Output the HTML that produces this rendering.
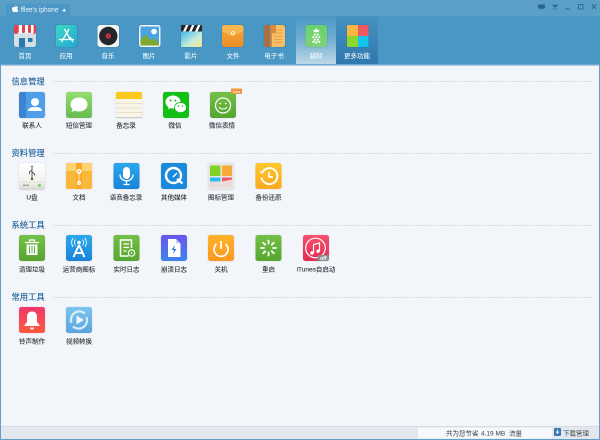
<!DOCTYPE html>
<html><head><meta charset="utf-8"><style>
html,body{margin:0;padding:0;width:600px;height:440px;overflow:hidden;background:#f2f5fa}
svg{display:block;filter:blur(.25px)}
text{font-family:"Liberation Sans","Noto Sans CJK SC",sans-serif}
.t{font-size:6.5px;fill:#f0f7fb;stroke:#f0f7fb;stroke-width:.08;text-anchor:middle}
.l{font-size:6.5px;fill:#2c3136;stroke:#2c3136;stroke-width:.1;text-anchor:middle}
.h{font-size:8.3px;fill:#1f5f96;stroke:#1f5f96;stroke-width:.12}
.d{stroke:#c2c9d2;stroke-width:.7;stroke-dasharray:1.5 1.5}
.s{filter:drop-shadow(0 .8px .6px rgba(20,60,90,.4))}
.g{filter:drop-shadow(0 .5px .4px rgba(90,100,110,.3))}
</style></head><body>
<svg width="600" height="440" viewBox="0 0 600 440" xmlns="http://www.w3.org/2000/svg">
<defs>
<linearGradient id="act" x1="0" y1="0" x2="0" y2="1"><stop offset="0" stop-color="#4b98c6"/><stop offset=".45" stop-color="#6eacd0"/><stop offset="1" stop-color="#bcd8e8"/></linearGradient>
<linearGradient id="more" x1="0" y1="0" x2="0" y2="1"><stop offset="0" stop-color="#4592c1"/><stop offset="1" stop-color="#2f78ae"/></linearGradient>
<linearGradient id="app" x1="0" y1="0" x2="1" y2="1"><stop offset="0" stop-color="#3dd8c0"/><stop offset="1" stop-color="#22a8d8"/></linearGradient>
<linearGradient id="vid" x1="0" y1="0" x2="1" y2="1"><stop offset="0" stop-color="#35b7ea"/><stop offset=".6" stop-color="#c8ecd8"/><stop offset="1" stop-color="#f6e68c"/></linearGradient>
<linearGradient id="org" x1="0" y1="0" x2="0" y2="1"><stop offset="0" stop-color="#f5a83c"/><stop offset="1" stop-color="#ec8d24"/></linearGradient>
<linearGradient id="pine" x1="0" y1="0" x2="0" y2="1"><stop offset="0" stop-color="#65d46e"/><stop offset="1" stop-color="#82d076"/></linearGradient>
<linearGradient id="sms" x1="0" y1="0" x2="0" y2="1"><stop offset="0" stop-color="#94dc70"/><stop offset="1" stop-color="#66bb50"/></linearGradient>
<linearGradient id="dg" x1="0" y1="0" x2="0" y2="1"><stop offset="0" stop-color="#74c047"/><stop offset="1" stop-color="#56a530"/></linearGradient>
<linearGradient id="blu" x1="0" y1="0" x2="0" y2="1"><stop offset="0" stop-color="#2aa8ec"/><stop offset="1" stop-color="#1a84d8"/></linearGradient>
<linearGradient id="yel" x1="0" y1="0" x2="0" y2="1"><stop offset="0" stop-color="#ffc72e"/><stop offset="1" stop-color="#f9a91e"/></linearGradient>
<linearGradient id="o2" x1="0" y1="0" x2="0" y2="1"><stop offset="0" stop-color="#ffb22c"/><stop offset="1" stop-color="#f9981e"/></linearGradient>
<linearGradient id="pur" x1="0" y1="0" x2="0" y2="1"><stop offset="0" stop-color="#6a55ec"/><stop offset="1" stop-color="#3c84ee"/></linearGradient>
<linearGradient id="red" x1="0" y1="0" x2="0" y2="1"><stop offset="0" stop-color="#f0386a"/><stop offset="1" stop-color="#ff5a3c"/></linearGradient>
<linearGradient id="itu" x1="0" y1="0" x2="0" y2="1"><stop offset="0" stop-color="#f8506e"/><stop offset="1" stop-color="#e42a50"/></linearGradient>
<linearGradient id="vc" x1="0" y1="0" x2="0" y2="1"><stop offset="0" stop-color="#7cc4ee"/><stop offset="1" stop-color="#5aa4de"/></linearGradient>
<linearGradient id="udisk" x1="0" y1="0" x2="0" y2="1"><stop offset="0" stop-color="#ffffff"/><stop offset=".7" stop-color="#f2f2ee"/><stop offset="1" stop-color="#d8d8d2"/></linearGradient>
</defs>

<rect width="600" height="440" fill="#f2f5fa"/>
<!-- header -->
<rect width="600" height="64" fill="#4897c5"/>
<rect width="600" height="16" fill="#5a9fc8"/>
<path d="M6 16V6q0-2 2-2h60q2 0 2 2v10z" fill="#4c97c5"/>
<path d="M13.500 7.200c.8 0 1.300-.5 1.800-.5-.1-.9.300-1.500.9-1.900 0 .8-.4 1.500-.9 1.900.5 0 1-.3 1.600-.2.500 0 1 .3 1.300.7-1.200.8-1 2.400.2 3-.4 1-1 2-1.800 2-.5 0-.8-.3-1.300-.3s-.8.300-1.300.3c-1 0-2-2-2-3.400 0-1.400.8-2 1.500-1.600z" fill="#fff"/>
<text x="20.500" y="12" font-size="7" fill="#eef6fa" textLength="38" lengthAdjust="spacingAndGlyphs">fflee's iphone</text>
<path d="M62 11.500l2.200-3.300 2.200 3.300z" fill="#d6e8f2"/>
<g fill="#2a6590" stroke="#2a6590">
<rect x="538" y="4.500" width="7" height="3.800" stroke="none"/>
<path d="M539.500 8.800h4" stroke-width=".7"/>
<path d="M552.500 5h5l-2.500 2.500zM552.500 9h5" stroke-width=".6"/>
<path d="M565 9h5" stroke-width="1"/>
<rect x="578.500" y="4.500" width="4.500" height="4.500" fill="none" stroke-width=".9"/>
<path d="M591.800 4.300l4.500 4.500M596.300 4.300l-4.500 4.500" stroke-width="1"/>
</g>
<rect x="296" y="16" width="40" height="48" fill="url(#act)"/>
<rect x="336" y="16" width="42" height="48" fill="url(#more)"/>

<!-- toolbar icons -->
<g class="s" transform="translate(14,25)"><rect y="2" width="22" height="20" rx="2.500" fill="#d6dee6"/><rect x="5" y="13" width="6" height="9" fill="#2a78b0"/><rect x="14" y="13" width="4.500" height="4" fill="#2a78b0"/>
<path d="M2 0h18q2 0 2 2v5a2 2 0 0 1-4 0 2 2 0 0 1-3.500 0 2 2 0 0 1-3.500 0 2 2 0 0 1-3.500 0 2 2 0 0 1-3.500 0 2 2 0 0 1-4 0V2q0-2 2-2z" fill="#e8414e"/>
<path d="M4.800 0h3.200v8.500h-3.200zM11 0h3v8.500h-3zM17 0h2.600v8.500h-2.600z" fill="#fff"/></g>
<g class="s" transform="translate(56,25)"><rect width="21" height="22" rx="2.500" fill="url(#app)"/><path d="M8.500 4l5.500 10M13 4l-7.500 13M3 14.500h15M14 12l3 5" stroke="#fff" stroke-width="1.300" fill="none"/></g>
<g class="s" transform="translate(97.500,25)"><rect width="21.500" height="22" rx="3" fill="#f4f4f4"/><circle cx="10.800" cy="11" r="9.200" fill="#24262a"/><circle cx="10.800" cy="11" r="2.600" fill="#d8324a"/><circle cx="10.800" cy="11" r=".7" fill="#222"/></g>
<g class="s" transform="translate(139,25)"><rect width="21.500" height="22" rx="2.500" fill="#f2f6f8"/><rect x="1.500" y="1.500" width="18.500" height="19" fill="#4aa4e0"/><circle cx="15" cy="6.500" r="2.800" fill="#fff"/><path d="M1.500 20.500v-6l5-5 5 6 3-2.500 5.500 5v2.500z" fill="#7fa82e"/></g>
<g class="s" transform="translate(181,25)"><rect y="6" width="21" height="16" rx="1.500" fill="url(#vid)"/><rect width="21" height="6.500" rx="1" fill="#23262a"/><path d="M2 6.500l3-6.500h2.500l-3 6.500zM8 6.500l3-6.500h2.500l-3 6.500zM14 6.500l3-6.500h2.500l-3 6.500z" fill="#fff"/></g>
<g class="s" transform="translate(222,25)"><rect width="21.500" height="22" rx="2.500" fill="url(#org)"/><path d="M0 3q0-3 3-3h15.500q3 0 3 3v3l-10.750 5.500L0 6z" fill="#f8b64e"/><circle cx="10.800" cy="8" r="1.500" fill="none" stroke="#fff" stroke-width=".8"/></g>
<g class="s" transform="translate(264,25)"><rect width="21" height="22" rx="2.500" fill="#f7bf62"/><path d="M2.500 0H6v22H2.500Q0 22 0 19.500v-17Q0 0 2.500 0z" fill="#a87048"/><rect x="6" width="2" height="22" fill="#c48c58"/><path d="M8 0h4v9l-2-1.500L8 9z" fill="#d88a3a"/><path d="M13 5h5M13 8h5M10 11.500h8M10 14.500h8M10 17.500h8" stroke="#e89a42" stroke-width=".8"/></g>
<g class="s" transform="translate(305.500,25)"><rect width="21.500" height="22" rx="2.500" fill="url(#pine)"/><path d="M10.800 3l1.300 2.300 1.900-.8-.9 2.800h-4.600l-.9-2.800 1.900.8z" fill="#fff"/><path d="M9.300 8.200l1.350 1.350-1.350 1.350-1.350-1.350zM12.300 8.200l1.350 1.350-1.350 1.350-1.350-1.350zM7.800 10.800l1.350 1.350-1.350 1.350-1.350-1.350zM10.800 10.800l1.350 1.350-1.350 1.350-1.350-1.350zM13.800 10.800l1.350 1.350-1.350 1.350-1.350-1.350zM9.300 13.400l1.350 1.350-1.350 1.350-1.350-1.350zM12.300 13.400l1.350 1.350-1.350 1.350-1.350-1.350zM7.800 15.500l1.350 1.350-1.350 1.350-1.350-1.350zM10.800 16l1.350 1.350-1.350 1.350-1.350-1.350zM13.800 15.500l1.350 1.350-1.350 1.350-1.350-1.350z" fill="#fff"/></g>
<g class="s" transform="translate(347,25)"><rect width="11" height="11" fill="#f9b540"/><rect x="11" width="10.500" height="11" fill="#ee5a62"/><rect y="11" width="11" height="11" fill="#8ad82c"/><rect x="11" y="11" width="10.500" height="11" fill="#14c2ee"/></g>

<text class="t" x="25" y="58">首页</text><text class="t" x="66" y="58">应用</text><text class="t" x="108" y="58">音乐</text><text class="t" x="149" y="58">图片</text><text class="t" x="191" y="58">影片</text><text class="t" x="233" y="58">文件</text><text class="t" x="274" y="58">电子书</text><text class="t" x="316" y="58">越狱</text><text class="t" x="357" y="58">更多功能</text>

<rect y="64" width="600" height="1.500" fill="#6fa8cc"/>
<rect y="64" width="1" height="376" fill="#5f9fc8"/><rect x="599" y="64" width="1" height="376" fill="#5f9fc8"/>
<rect y="439" width="600" height="1" fill="#5f9fc8"/>

<text class="h" x="11.500" y="84.500">信息管理</text><path class="d" d="M53 81.500H592"/>
<text class="h" x="11.500" y="156">资料管理</text><path class="d" d="M53 153.500H592"/>
<text class="h" x="11.500" y="228">系统工具</text><path class="d" d="M53 225.500H592"/>
<text class="h" x="11.500" y="300">常用工具</text><path class="d" d="M53 297.500H592"/>

<!-- ROW 1 -->
<g class="g" transform="translate(19,92)"><rect width="26" height="26" rx="2.500" fill="#4f9fe8"/><path d="M2.500 0H7v26H2.500Q0 26 0 23.500v-21Q0 0 2.500 0z" fill="#3f83d0"/><circle cx="16" cy="10" r="4" fill="#fff"/><path d="M9 19c0-3 3-4 7-4s7 1 7 4z" fill="#fff"/></g>
<g class="g" transform="translate(66,92)"><rect width="26" height="26" rx="2.500" fill="url(#sms)"/><ellipse cx="13" cy="12.500" rx="8.500" ry="7" fill="#fff"/><path d="M7 16l-1.500 4 5-2z" fill="#fff"/></g>
<g class="g" transform="translate(116,92)"><rect width="26" height="26" rx="2" fill="#f8f4e8"/><path d="M2 0h22q2 0 2 2v5H0V2q0-2 2-2z" fill="#fcc81c"/><path d="M0 11.500h26M0 16h26M0 20.500h26" stroke="#e0d8c0" stroke-width=".7"/><rect y="25" width="26" height="1" fill="#cfcbc0"/></g>
<g class="g" transform="translate(163,92)"><rect width="26" height="26" rx="2.500" fill="#12c015"/><ellipse cx="10" cy="10" rx="7.500" ry="6.500" fill="#fff"/><path d="M6 14.500l-1 3 3.500-2z" fill="#fff"/><ellipse cx="17.500" cy="15.500" rx="6" ry="5.200" stroke="#12c015" stroke-width=".8" fill="#fff"/><circle cx="7.500" cy="8.500" r="1" fill="#12c015"/><circle cx="12.500" cy="8.500" r="1" fill="#12c015"/><circle cx="15.500" cy="14" r=".8" fill="#12c015"/><circle cx="19.500" cy="14" r=".8" fill="#12c015"/></g>
<g class="g" transform="translate(210,92)"><rect width="26" height="26" rx="2.500" fill="url(#dg)"/><circle cx="13" cy="13.500" r="7.500" fill="none" stroke="#fff" stroke-width="1.200"/><circle cx="10.300" cy="11.500" r=".9" fill="#fff"/><circle cx="15.700" cy="11.500" r=".9" fill="#fff"/><path d="M9 15c1.500 2.600 6.500 2.600 8 0" fill="none" stroke="#fff" stroke-width="1"/></g>
<rect x="231" y="88.500" width="11" height="5.500" rx=".5" fill="#f4953a"/><text x="236.500" y="93" font-size="4" fill="#fff" text-anchor="middle">new</text>
<text class="l" x="32" y="127.500">联系人</text><text class="l" x="79" y="127.500">短信管理</text><text class="l" x="126" y="127.500">备忘录</text><text class="l" x="175" y="127.500">微信</text><text class="l" x="222" y="127.500">微信表情</text>

<!-- ROW 2 -->
<g class="g" transform="translate(19,163)"><rect width="26" height="27" rx="2.500" fill="url(#udisk)"/><path d="M0 19h26" stroke="#d0d0ca" stroke-width=".6"/><path d="M13 3v13M13 7l-2.500 2v2M13 9l2.500 2v1.500" stroke="#4a4f54" stroke-width=".9" fill="none"/><path d="M13 2l-1 2h2z" fill="#4a4f54"/><circle cx="13" cy="16" r="1.200" fill="#4a4f54"/><rect x="4" y="21.500" width="6" height="1.500" fill="#a8a8a0"/><circle cx="20.500" cy="22.300" r="1.400" fill="#7ccc44"/></g>
<g class="g" transform="translate(66,163)"><rect width="26" height="26" rx="2" fill="#fab83a"/><path d="M2 0h22q2 0 2 2v6H0V2q0-2 2-2z" fill="#fdd272"/><rect x="10" width="6" height="26" fill="#f9a92a"/><circle cx="13" cy="8.500" r="2.500" fill="#fff"/><circle cx="13" cy="8.500" r="1" fill="#f5a428"/><circle cx="13" cy="20" r="2" fill="#fff"/><circle cx="13" cy="20" r=".8" fill="#f5a428"/><path d="M13 9v11" stroke="#fff" stroke-width=".7"/></g>
<g class="g" transform="translate(113.500,163)"><rect width="26" height="26" rx="2.500" fill="url(#blu)"/><rect x="9.500" y="4" width="7" height="12" rx="3.500" fill="#fff"/><path d="M6.500 11.500c0 8.500 13 8.500 13 0M13 17v4M10 21.500h6" stroke="#fff" stroke-width="1.300" fill="none"/></g>
<g class="g" transform="translate(161,163)"><rect width="26" height="26" rx="2.500" fill="#1b8adc"/><circle cx="12.500" cy="12.500" r="7.500" fill="none" stroke="#fff" stroke-width="2.400"/><path d="M16 16l5.500 4.500" stroke="#fff" stroke-width="2.400"/><path d="M12 14l4-4" stroke="#fff" stroke-width="1.300"/></g>
<g class="g" transform="translate(208,163)"><rect width="26" height="27" rx="2" fill="#e8e6e4"/><rect x="2" y="2.500" width="10.500" height="10.500" fill="#82d226"/><rect x="14" y="2.500" width="10" height="10.500" fill="#fba83a"/><rect x="2" y="14.500" width="10.500" height="4" fill="#2cbaf0"/><path d="M14 14.500h10v2l-10 2z" fill="#ee5a64"/><path d="M2 19h10.500v5H2zM14 19l10-2v7H14z" fill="#ecd8d8" opacity=".8"/></g>
<g class="g" transform="translate(255.500,163)"><rect width="26" height="26" rx="2.500" fill="url(#yel)"/><path d="M7 9a8 8 0 1 1-1 5.500" fill="none" stroke="#fff" stroke-width="1.900"/><path d="M3.500 8.500h5.500v-1l-2 3.500z" fill="#fff"/><path d="M13.500 9v5h4" fill="none" stroke="#fff" stroke-width="1.700"/></g>
<text class="l" x="32" y="199.500">U盘</text><text class="l" x="79" y="199.500">文档</text><text class="l" x="126" y="199.500">语音备忘录</text><text class="l" x="174" y="199.500">其他媒体</text><text class="l" x="221" y="199.500">图标管理</text><text class="l" x="268.500" y="199.500">备份还原</text>

<!-- ROW 3 -->
<g class="g" transform="translate(19,235)"><rect width="26" height="26" rx="2.500" fill="url(#dg)"/><path d="M6 7.500h14M10.500 7V5h5v2" fill="none" stroke="#fff" stroke-width="1.300"/><path d="M7.500 9.500h11V20h-11z" fill="#fff"/><path d="M10.500 11v7.500M13 11v7.500M15.500 11v7.500" stroke="#63ae38" stroke-width="1"/></g>
<g class="g" transform="translate(66,235)"><rect width="26" height="26" rx="2.500" fill="url(#blu)"/><circle cx="13" cy="7.500" r="1.800" fill="#fff"/><path d="M9.500 4.500a5 5 0 0 0 0 6M16.500 4.500a5 5 0 0 1 0 6M7 3a8 8 0 0 0 0 9M19 3a8 8 0 0 1 0 9" fill="none" stroke="#fff" stroke-width=".9"/><path d="M13 10l-5.500 12M13 10l5.500 12M9.500 18h7" fill="none" stroke="#fff" stroke-width="2"/></g>
<g class="g" transform="translate(113.500,235)"><rect width="26" height="26" rx="2.500" fill="url(#dg)"/><path d="M15 21H7V5h11v8" fill="none" stroke="#fff" stroke-width="1.500"/><path d="M10 9h5.500M10 12.500h5.500M10 16h3" stroke="#fff" stroke-width="1.300"/><circle cx="18" cy="18" r="3.200" fill="none" stroke="#fff" stroke-width="1.100"/><circle cx="18" cy="18" r=".8" fill="#fff"/></g>
<g class="g" transform="translate(161,235)"><rect width="26" height="26" rx="2.500" fill="url(#pur)"/><path d="M7 4h8l4.500 4.500V22H7z" fill="#fff"/><path d="M15 4v4.500h4.500z" fill="#c4cdf6"/><path d="M14 10l-3.500 5h2.500l-1 4 3.500-5h-2.500z" fill="#2f74e4"/></g>
<g class="g" transform="translate(208,235)"><rect width="26" height="26" rx="2.500" fill="url(#o2)"/><path d="M8.500 9a7 7 0 1 0 9 0" fill="none" stroke="#fff" stroke-width="1.700"/><path d="M13 6v8" stroke="#fff" stroke-width="1.700"/></g>
<g class="g" transform="translate(255.500,235)"><rect width="26" height="26" rx="2.500" fill="url(#dg)"/><g stroke="#fff" stroke-width="1.800" stroke-linecap="round"><path d="M13 5.500v3M13 17.500v3M5.500 13h3M17.500 13h3M7.700 7.700l2 2M16.300 16.300l2 2M18.300 7.700l-2 2M9.700 16.300l-2 2"/></g></g>
<g class="g" transform="translate(303,235)"><rect width="26" height="26" rx="2.500" fill="url(#itu)"/><circle cx="12.500" cy="13" r="9.800" fill="none" stroke="#fff" stroke-width="1.200"/><path d="M10.500 9.500l6-1.500v8M10.500 9.500V18" fill="none" stroke="#fff" stroke-width="1.200"/><circle cx="9" cy="18" r="1.700" fill="#fff"/><circle cx="15" cy="16.300" r="1.700" fill="#fff"/><path d="M14.500 26v-4q0-2 2-2H26v3.500q0 2.500-2.500 2.500z" fill="#8c8c8c"/><text x="20.300" y="25" font-size="5" font-weight="bold" fill="#fff" text-anchor="middle">off</text></g>
<text class="l" x="32" y="271.500">清理垃圾</text><text class="l" x="79" y="271.500">运营商图标</text><text class="l" x="126.500" y="271.500">实时日志</text><text class="l" x="174" y="271.500">崩溃日志</text><text class="l" x="221" y="271.500">关机</text><text class="l" x="268.500" y="271.500">重启</text><text class="l" x="316" y="271.500">iTunes自启动</text>

<!-- ROW 4 -->
<g class="g" transform="translate(19,307)"><rect width="26" height="26" rx="2.500" fill="url(#red)"/><path d="M13 4.500c-3.500 0-5 2.500-5 5.500v5l-2.500 3v1h15v-1L18 15v-5c0-3-1.500-5.500-5-5.500z" fill="#fff"/><path d="M11 20.500a2 2 0 0 0 4 0z" fill="#fff"/></g>
<g class="g" transform="translate(66,307)"><rect width="26" height="26" rx="2.500" fill="url(#vc)"/><path d="M5.500 16A8.500 8.500 0 0 1 19 6.500M20.500 10A8.500 8.500 0 0 1 7 19.500" fill="none" stroke="#d4ecfa" stroke-width="2.200"/><path d="M10.500 8.500l7.500 4.500-7.500 4.500z" fill="#eef8ff"/></g>
<text class="l" x="32" y="343.500">铃声制作</text><text class="l" x="79" y="343.500">视频转换</text>

<!-- status bar -->
<rect x="1" y="426.500" width="598" height="12.500" fill="#e3e8ee"/>
<rect x="1" y="426" width="598" height=".7" fill="#d2d8de"/>
<rect x="418" y="427.500" width="134" height="11" fill="#f6f8fb"/>
<text x="446" y="435.500" font-size="6.500" fill="#3c4349">共为您节省</text>
<text x="481" y="435.500" font-size="6.500" fill="#3c4349">4.19 MB</text>
<text x="509" y="435.500" font-size="6.500" fill="#3c4349">流量</text>
<rect x="554" y="428" width="7" height="8" rx="1" fill="#3a78b4"/><path d="M557.500 429.500v3M556 431.500l1.500 2 1.500-2" stroke="#fff" stroke-width=".8" fill="none"/>
<text x="563" y="435.500" font-size="6.500" fill="#3c4349">下载管理</text>
</svg>
</body></html>
